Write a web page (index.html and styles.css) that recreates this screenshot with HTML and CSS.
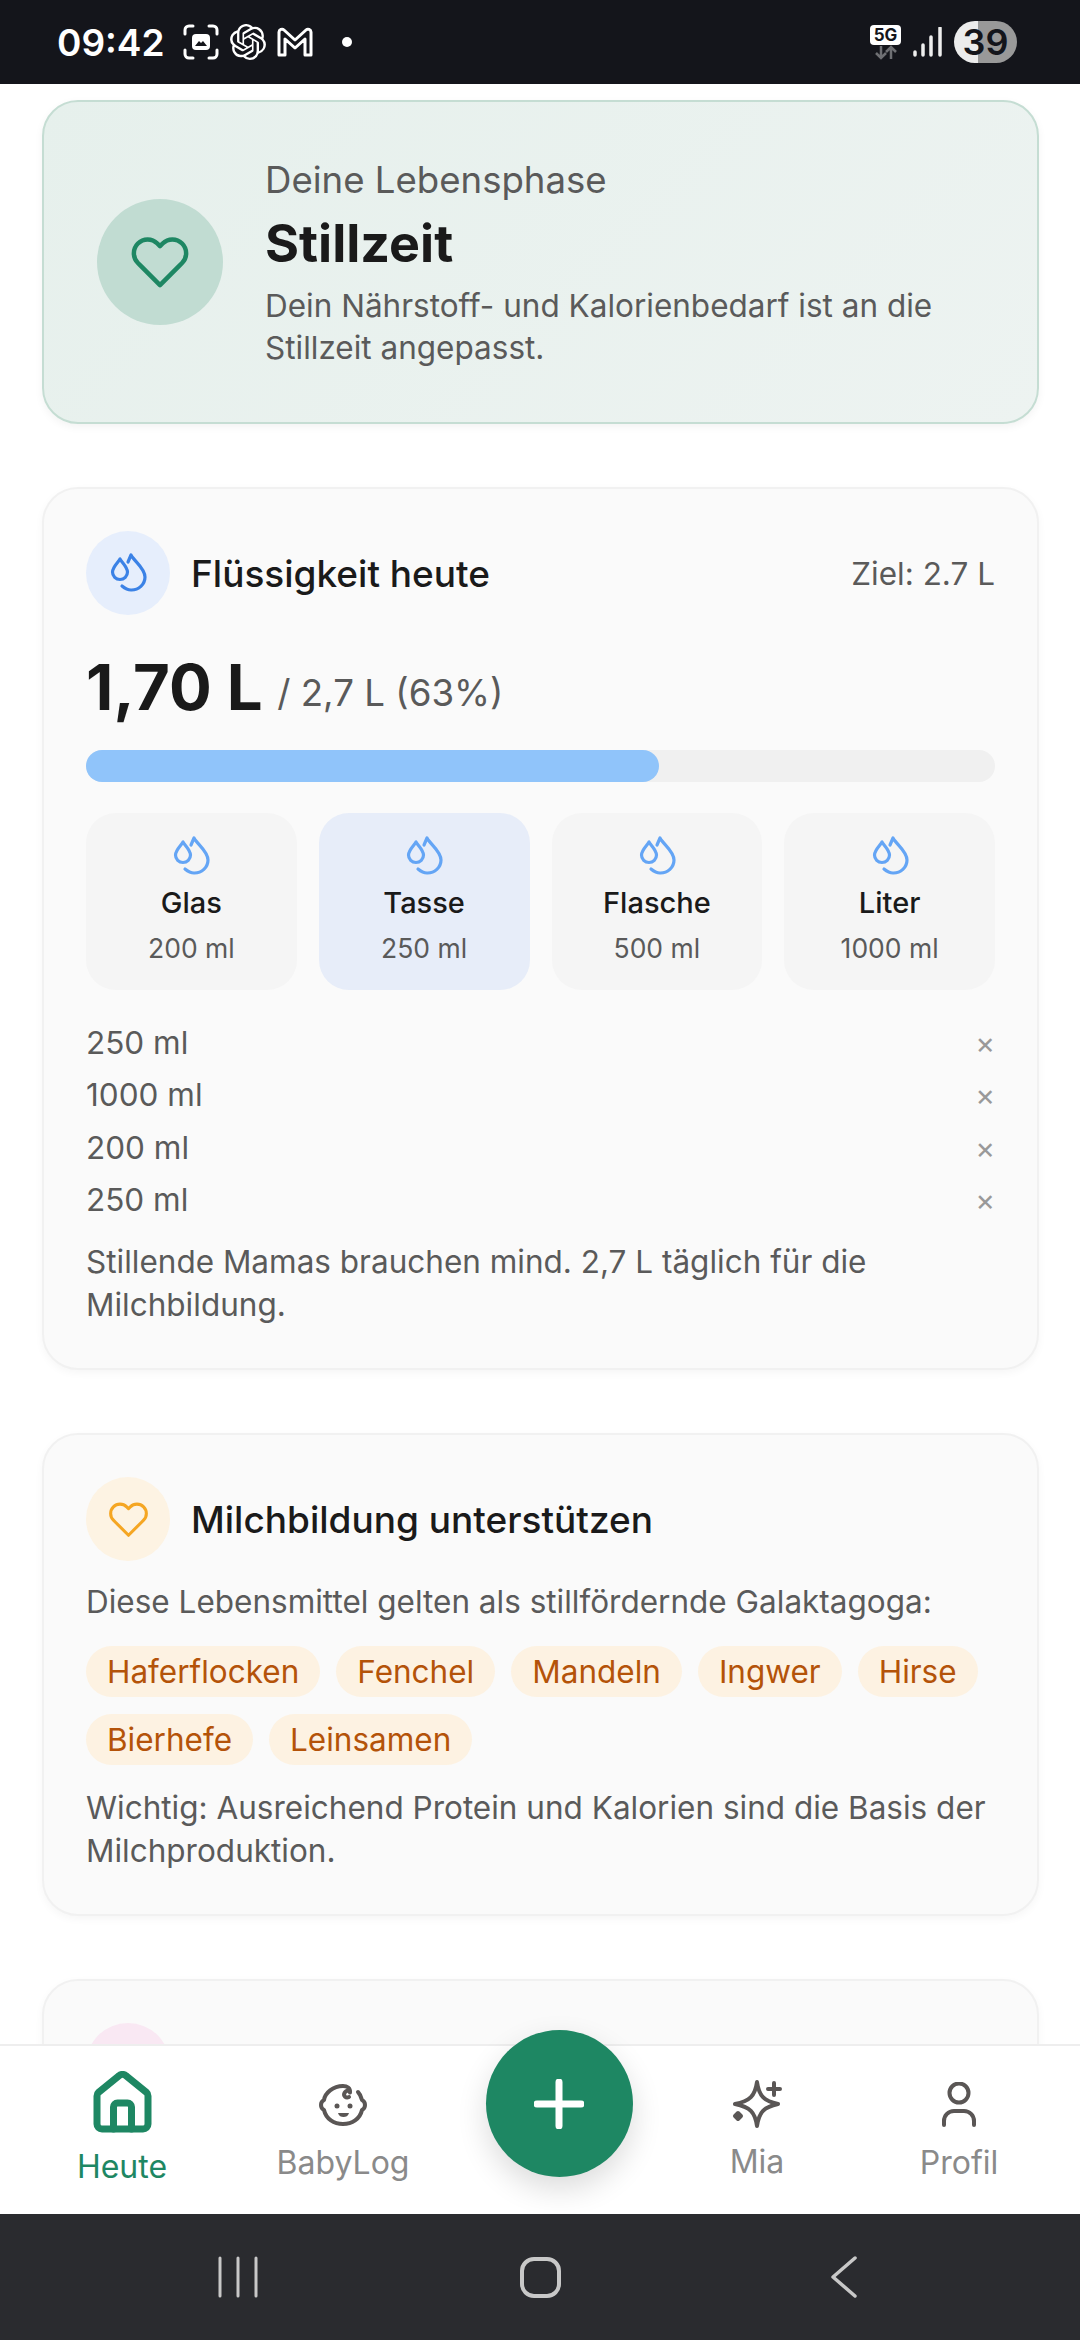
FILE: index.html
```html
<!DOCTYPE html>
<html lang="de">
<head>
  <meta charset="UTF-8" />
  <meta name="viewport" content="width=device-width, initial-scale=1" />
  <title>Heute</title>
  <link rel="stylesheet" href="styles.css">
</head>
<body>
  <svg class="defs" width="0" height="0">
    <symbol id="drops" viewBox="0 0 40 42">
      <path d="M12 7C10.500 10 4.500 15 4.500 20a7.500 7.500 0 0 0 15 0C19.500 15 13.500 10 12 7z"/>
      <path d="M20 10L23 3C26 9 37 16 37 25A13.500 13 0 0 1 23 38C20 38 17 36.500 14 34"/>
    </symbol>
    <symbol id="heart" viewBox="0 0 24 24">
      <path d="M20.84 4.61a5.5 5.5 0 0 0-7.78 0L12 5.67l-1.06-1.06a5.5 5.5 0 0 0-7.78 7.78l1.06 1.06L12 21.23l7.78-7.78 1.06-1.06a5.5 5.5 0 0 0 0-7.78z"/>
    </symbol>
  </svg>

  <header class="status">
    <span class="clock">09:42</span>
    <svg class="st-icon" viewBox="0 0 36 36">
      <path class="st-line" d="M2 10V6a4 4 0 0 1 4-4h4M26 2h4a4 4 0 0 1 4 4v4M34 26v4a4 4 0 0 1-4 4h-4M10 34H6a4 4 0 0 1-4-4v-4"/>
      <rect class="st-fill" x="9" y="10" width="18" height="16" rx="4"/>
      <path class="st-cut" d="M12 22l4-5 2 2 2-2 4 5z"/>
    </svg>
    <svg class="st-icon" viewBox="0 0 24 24">
      <path class="st-fill" d="M22.2819 9.8211a5.9847 5.9847 0 0 0-.5157-4.9108 6.0462 6.0462 0 0 0-6.5098-2.9A6.0651 6.0651 0 0 0 4.9807 4.1818a5.9847 5.9847 0 0 0-3.9977 2.9 6.0462 6.0462 0 0 0 .7427 7.0966 5.98 5.98 0 0 0 .511 4.9107 6.051 6.051 0 0 0 6.5146 2.9001A5.9847 5.9847 0 0 0 13.2599 24a6.0557 6.0557 0 0 0 5.7718-4.2058 5.9894 5.9894 0 0 0 3.9977-2.9001 6.0557 6.0557 0 0 0-.7475-7.0729zm-9.022 12.6081a4.4755 4.4755 0 0 1-2.8764-1.0408l.1419-.0804 4.7783-2.7582a.7948.7948 0 0 0 .3927-.6813v-6.7369l2.02 1.1686a.071.071 0 0 1 .038.052v5.5826a4.504 4.504 0 0 1-4.4945 4.4944zm-9.6607-4.1254a4.4708 4.4708 0 0 1-.5346-3.0137l.142.0852 4.783 2.7582a.7712.7712 0 0 0 .7806 0l5.8428-3.3685v2.3324a.0804.0804 0 0 1-.0332.0615L9.74 19.9502a4.4992 4.4992 0 0 1-6.1408-1.6464zM2.3408 7.8956a4.485 4.485 0 0 1 2.3655-1.9728V11.6a.7664.7664 0 0 0 .3879.6765l5.8144 3.3543-2.0201 1.1685a.0757.0757 0 0 1-.071 0l-4.8303-2.7865A4.504 4.504 0 0 1 2.3408 7.872zm16.5963 3.8558L13.1038 8.364 15.1192 7.2a.0757.0757 0 0 1 .071 0l4.8303 2.7913a4.4944 4.4944 0 0 1-.6765 8.1042v-5.6772a.79.79 0 0 0-.407-.667zm2.0107-3.0231l-.142-.0852-4.7735-2.7818a.7759.7759 0 0 0-.7854 0L9.409 9.2297V6.8974a.0662.0662 0 0 1 .0284-.0615l4.8303-2.7866a4.4992 4.4992 0 0 1 6.6802 4.66zM8.3065 12.863l-2.02-1.1638a.0804.0804 0 0 1-.038-.0567V6.0742a4.4992 4.4992 0 0 1 7.3757-3.4537l-.142.0805L8.704 5.459a.7948.7948 0 0 0-.3927.6813zm1.0976-2.3654l2.602-1.4998 2.6069 1.4998v2.9994l-2.5974 1.4997-2.6067-1.4997Z"/>
    </svg>
    <svg class="st-icon" viewBox="0 0 36 36">
      <path class="st-line" d="M2 31V8a3 3 0 0 1 5-2l11 10L29 6a3 3 0 0 1 5 2v23h-6V15l-10 9-10-9v16z"/>
    </svg>
    <span class="st-dot"></span>
    <span class="status-right">
      <span class="net">
        <span class="net-label">5G</span>
        <svg class="net-arrows" viewBox="0 0 24 15">
          <path d="M7 1v12M2 8l5 5 5-5M17 14V2M12 7l5-5 5 5"/>
        </svg>
      </span>
      <svg class="signal" viewBox="0 0 29 30">
        <path d="M2 25v3M10 18v10M18 10v18M27 1v27"/>
      </svg>
      <span class="battery">39</span>
    </span>
  </header>

  <main class="content">
    <section class="hero">
      <div class="hero-icon">
        <svg class="heart-lg"><use href="#heart"/></svg>
      </div>
      <div class="hero-text">
        <p class="hero-label">Deine Lebensphase</p>
        <h1 class="hero-title">Stillzeit</h1>
        <p class="hero-desc">Dein Nährstoff- und Kalorienbedarf ist an die Stillzeit angepasst.</p>
      </div>
    </section>

    <section class="card">
      <div class="card-head">
        <div class="round round-blue">
          <svg class="drops drops-dark"><use href="#drops"/></svg>
        </div>
        <h2 class="card-title">Flüssigkeit heute</h2>
        <span class="goal">Ziel: 2.7 L</span>
      </div>
      <div class="amount">
        <span class="amount-big">1,70 L</span>
        <span class="amount-rest">/ 2,7 L (63%)</span>
      </div>
      <div class="track"><div class="fill" style="width: 63%"></div></div>
      <div class="tiles">
        <div class="tile">
          <svg class="drops"><use href="#drops"/></svg>
          <span class="tile-name">Glas</span>
          <span class="tile-size">200 ml</span>
        </div>
        <div class="tile tile-active">
          <svg class="drops"><use href="#drops"/></svg>
          <span class="tile-name">Tasse</span>
          <span class="tile-size">250 ml</span>
        </div>
        <div class="tile">
          <svg class="drops"><use href="#drops"/></svg>
          <span class="tile-name">Flasche</span>
          <span class="tile-size">500 ml</span>
        </div>
        <div class="tile">
          <svg class="drops"><use href="#drops"/></svg>
          <span class="tile-name">Liter</span>
          <span class="tile-size">1000 ml</span>
        </div>
      </div>
      <ul class="log">
        <li><span>250 ml</span><span class="remove">×</span></li>
        <li><span>1000 ml</span><span class="remove">×</span></li>
        <li><span>200 ml</span><span class="remove">×</span></li>
        <li><span>250 ml</span><span class="remove">×</span></li>
      </ul>
      <p class="note">Stillende Mamas brauchen mind. 2,7 L täglich für die Milchbildung.</p>
    </section>

    <section class="card">
      <div class="card-head">
        <div class="round round-orange">
          <svg class="heart-sm"><use href="#heart"/></svg>
        </div>
        <h2 class="card-title">Milchbildung unterstützen</h2>
      </div>
      <p class="note note-intro">Diese Lebensmittel gelten als stillfördernde Galaktagoga:</p>
      <div class="chips">
        <span class="chip">Haferflocken</span>
        <span class="chip">Fenchel</span>
        <span class="chip">Mandeln</span>
        <span class="chip">Ingwer</span>
        <span class="chip">Hirse</span>
        <span class="chip">Bierhefe</span>
        <span class="chip">Leinsamen</span>
      </div>
      <p class="note note-end">Wichtig: Ausreichend Protein und Kalorien sind die Basis der Milchproduktion.</p>
    </section>

    <section class="card">
      <div class="card-head">
        <div class="round round-pink"></div>
      </div>
    </section>
  </main>

  <nav class="tabbar">
    <div class="tab tab-active">
      <svg class="tab-home" viewBox="0 0 59 62">
        <path d="M4 25a5 5 0 0 1 1.700-3.800L26 4.800a5 5 0 0 1 7 0l20.300 16.400A5 5 0 0 1 55 25v28a5 5 0 0 1-5 5H9a5 5 0 0 1-5-5z"/>
        <path d="M20.500 58V36a4 4 0 0 1 4-4h10a4 4 0 0 1 4 4v22"/>
      </svg>
      <span>Heute</span>
    </div>
    <div class="tab tab-baby-item">
      <svg class="tab-baby" viewBox="0 0 48 42">
        <path d="M30 13c-3 1.500-6-1-4.500-4 1.500-3 5-3 5.500-.5C31.500 4 28 2 24 2 14 2 6 9 5 16c-2 1-3 3-3 5s1 4 3 5c2 9 10 14 19 14s17-5 19-14c2-1 3-3 3-5s-1-4-3-5c-.5-2-2-6-4-8"/>
        <circle class="baby-eye" cx="18" cy="22" r="2.500"/>
        <circle class="baby-eye" cx="31" cy="22" r="2.500"/>
        <path class="baby-smile" d="M19 29h11c-1 3-3 4-5.500 4S20 32 19 29z"/>
      </svg>
      <span>BabyLog</span>
    </div>
    <button class="fab">
      <svg viewBox="0 0 50 50"><path d="M25 3v44M3 25h44"/></svg>
    </button>
    <div class="tab">
      <svg class="tab-star" viewBox="0 0 52 52">
        <path d="M26 4C28 18 33 23 47 26C33 29 28 34 26 48C24 34 19 29 4 26C19 23 24 18 26 4z"/>
        <path d="M43 5v12M37 11h12"/>
        <path class="star-dot" d="M7 35l3 3-3 3-3-3z"/>
      </svg>
      <span>Mia</span>
    </div>
    <div class="tab">
      <svg class="tab-user" viewBox="0 0 36 46">
        <circle cx="18" cy="11" r="9.500"/>
        <path d="M3 43v-4a10 10 0 0 1 10-10h10a10 10 0 0 1 10 10v4"/>
      </svg>
      <span>Profil</span>
    </div>
  </nav>

  <footer class="sysnav">
    <svg class="sys-recent" viewBox="0 0 40 42"><path d="M2 2v38M20 2v38M38 2v38"/></svg>
    <span class="sys-home"></span>
    <svg class="sys-back" viewBox="0 0 26 42"><path d="M24 2L2 21l22 19"/></svg>
  </footer>
</body>
</html>
```

FILE: styles.css
```css
* {
  box-sizing: border-box;
}
html,
body {
  margin: 0;
  height: 2340px;
}
body {
  display: flex;
  flex-direction: column;
  overflow: hidden;
  background: #fff;
  color: #1a1a1a;
  font-family: Inter, "Noto Sans", sans-serif;
}
h1,
h2,
p,
ul {
  margin: 0;
  padding: 0;
}
.defs {
  position: absolute;
}

/* status bar */
.status {
  flex: 0 0 84px;
  display: flex;
  align-items: center;
  padding: 0 63px 0 57px;
  background: #14151b;
  color: #fff;
}
.clock {
  font-size: 37px;
  font-weight: 600;
  margin-right: 18px;
}
.st-icon {
  width: 36px;
  height: 36px;
  margin-right: 11px;
}
.st-line {
  fill: none;
  stroke: #fff;
  stroke-width: 3;
  stroke-linecap: round;
  stroke-linejoin: round;
}
.st-fill {
  fill: #fff;
}
.st-cut {
  fill: #14151b;
}
.st-dot {
  width: 10px;
  height: 10px;
  margin-left: 18px;
  border-radius: 50%;
  background: #fff;
}
.status-right {
  margin-left: auto;
  display: flex;
  align-items: center;
}
.net {
  display: flex;
  flex-direction: column;
  align-items: center;
  width: 31px;
  margin-right: 12px;
}
.net-label {
  width: 31px;
  height: 20px;
  border-radius: 4px;
  background: #fff;
  color: #14151b;
  font-size: 17px;
  font-weight: 700;
  line-height: 20px;
  text-align: center;
}
.net-arrows {
  width: 24px;
  height: 15px;
  fill: none;
  stroke: #6e6f73;
  stroke-width: 2.500;
}
.signal {
  width: 29px;
  height: 30px;
  margin-right: 12px;
  fill: none;
  stroke: #eee;
  stroke-width: 3.500;
  stroke-linecap: round;
}
.battery {
  width: 63px;
  height: 42px;
  border-radius: 21px;
  background: linear-gradient(90deg, #ececec 38%, #999 38%);
  color: #14151b;
  font-size: 36px;
  font-weight: 600;
  line-height: 42px;
  text-align: center;
}

/* scrolling part */
.content {
  flex: 1;
  min-height: 0;
  overflow: hidden;
  display: flex;
  flex-direction: column;
  gap: 63px;
  padding: 16px 41px 0 42px;
}
.hero {
  flex: none;
  height: 324px;
  display: flex;
  align-items: center;
  gap: 42px;
  padding: 0 53px;
  border: 2px solid #c5ddd3;
  border-radius: 36px;
  background: linear-gradient(135deg, #e6f0ec, #edf3f1);
  box-shadow: 0 3px 8px rgba(0, 0, 0, 0.05);
}
.hero-icon {
  flex: none;
  width: 126px;
  height: 126px;
  display: flex;
  align-items: center;
  justify-content: center;
  border-radius: 50%;
  background: #c1dcd2;
}
.heart-lg {
  width: 60px;
  height: 60px;
  fill: none;
  stroke: #1e8763;
  stroke-width: 1.800;
  stroke-linejoin: round;
}
.hero-label {
  color: #5a5a5a;
  font-size: 36.600px;
  line-height: 48px;
}
.hero-title {
  margin-top: 8px;
  font-size: 52px;
  font-weight: 700;
  line-height: 64px;
}
.hero-desc {
  margin-top: 9px;
  color: #5a5a5a;
  font-size: 31.500px;
  line-height: 42px;
}

/* cards */
.card {
  flex: none;
  padding: 42px;
  border: 2px solid #f1f1f1;
  border-radius: 36px;
  background: #fafafa;
  box-shadow: 0 3px 8px rgba(0, 0, 0, 0.04);
}
.card-head {
  display: flex;
  align-items: center;
  gap: 21px;
}
.round {
  flex: none;
  width: 84px;
  height: 84px;
  display: flex;
  align-items: center;
  justify-content: center;
  border-radius: 50%;
}
.round-blue {
  background: #e6eefc;
}
.round-orange {
  background: #fdf3e3;
}
.round-pink {
  background: #f9e8f3;
}
.card-title {
  font-size: 37px;
  font-weight: 500;
}
.goal {
  margin-left: auto;
  color: #5a5a5a;
  font-size: 31.500px;
}
.drops {
  width: 40px;
  height: 42px;
  fill: none;
  stroke: #64a5f5;
  stroke-width: 3.200;
  stroke-linecap: round;
  stroke-linejoin: round;
}
.drops-dark {
  stroke: #3b82e6;
}
.heart-sm {
  width: 41px;
  height: 41px;
  fill: none;
  stroke: #f5a623;
  stroke-width: 1.800;
  stroke-linejoin: round;
}
.amount {
  margin-top: 32px;
  line-height: 80px;
  white-space: nowrap;
}
.amount-big {
  font-size: 63.500px;
  font-weight: 700;
}
.amount-rest {
  margin-left: 10px;
  color: #5a5a5a;
  font-size: 36.700px;
  vertical-align: 4px;
}
.track {
  height: 32px;
  margin-top: 6px;
  border-radius: 16px;
  background: #f0f0f0;
}
.fill {
  height: 100%;
  border-radius: 16px;
  background: #90c4fa;
}
.tiles {
  display: grid;
  grid-template-columns: repeat(4, 1fr);
  gap: 22px;
  margin-top: 31px;
}
.tile {
  height: 177px;
  display: flex;
  flex-direction: column;
  align-items: center;
  padding-top: 22px;
  border-radius: 30px;
  background: #f5f5f5;
}
.tile-active {
  background: #e7edf9;
}
.tile-name {
  margin-top: 6px;
  font-size: 29px;
  font-weight: 500;
  line-height: 40px;
}
.tile-size {
  margin-top: 5px;
  color: #5a5a5a;
  font-size: 26.500px;
  line-height: 40px;
}
.log {
  margin-top: 27px;
  list-style: none;
  color: #5a5a5a;
  font-size: 31.500px;
  line-height: 52.300px;
}
.log li {
  display: flex;
  justify-content: space-between;
}
.remove {
  color: #999;
  font-size: 30px;
}
.note {
  color: #5a5a5a;
  font-size: 31.500px;
  line-height: 43px;
}
.log + .note {
  margin-top: 14px;
}
.note-intro {
  margin-top: 19px;
}
.note-end {
  margin-top: 21px;
}
.chips {
  display: flex;
  flex-wrap: wrap;
  gap: 17px 16px;
  margin-top: 23px;
}
.chip {
  height: 51px;
  padding: 0 21px;
  border-radius: 26px;
  background: #fdf2e2;
  color: #b45309;
  font-size: 31.500px;
  line-height: 51px;
}

/* bottom bar */
.tabbar {
  flex: 0 0 170px;
  display: grid;
  grid-template-columns: 244px 198px 234px 162px 242px;
  position: relative;
  border-top: 2px solid #eee;
  background: rgba(255, 255, 255, 0.98);
}
.tab {
  display: flex;
  flex-direction: column;
  align-items: center;
  padding-top: 35px;
  color: #8a8a8a;
  font-size: 32px;
}
.tab span {
  margin-top: 17px;
}
.tab svg {
  fill: none;
  stroke: #5a5655;
  stroke-width: 4;
  stroke-linecap: round;
  stroke-linejoin: round;
}
.tab-baby-item {
  padding-top: 38px;
}
.tab-active {
  padding-top: 25px;
  color: #1e8763;
}
.tab-active span {
  margin-top: 14px;
}
.tab .tab-home {
  width: 59px;
  height: 62px;
  stroke: #1e8763;
  stroke-width: 7;
}
.tab-baby {
  width: 48px;
  height: 42px;
}
.tab .baby-eye,
.tab .baby-smile {
  fill: #5a5655;
  stroke: none;
}
.tab-star {
  width: 52px;
  height: 52px;
  margin-top: -3px;
  margin-bottom: -5px;
}
.star-dot {
  fill: #5a5655;
}
.tab-user {
  width: 36px;
  height: 46px;
  margin-top: 1px;
  margin-bottom: -2px;
}
.fab {
  position: relative;
  justify-self: center;
  width: 147px;
  height: 147px;
  margin-top: -16px;
  padding: 0;
  border: 0;
  border-radius: 50%;
  background: #1e8763;
  box-shadow: 0 12px 30px rgba(0, 0, 0, 0.14);
}
.fab svg {
  display: block;
  width: 50px;
  height: 50px;
  margin: auto;
  fill: none;
  stroke: #fff;
  stroke-width: 7;
  stroke-linecap: round;
}

/* system navigation */
.sysnav {
  flex: 0 0 126px;
  display: flex;
  align-items: center;
  background: #2a2b2f;
}
.sysnav svg {
  fill: none;
  stroke: #c8c8c8;
  stroke-linecap: round;
  stroke-linejoin: round;
}
.sys-recent {
  width: 40px;
  height: 42px;
  margin-left: 218px;
  stroke-width: 3;
}
.sys-home {
  width: 41px;
  height: 41px;
  margin-left: 262px;
  border: 4px solid #c8c8c8;
  border-radius: 14px;
}
.sys-back {
  width: 26px;
  height: 42px;
  margin-left: 270px;
  stroke-width: 3.500;
}
```
